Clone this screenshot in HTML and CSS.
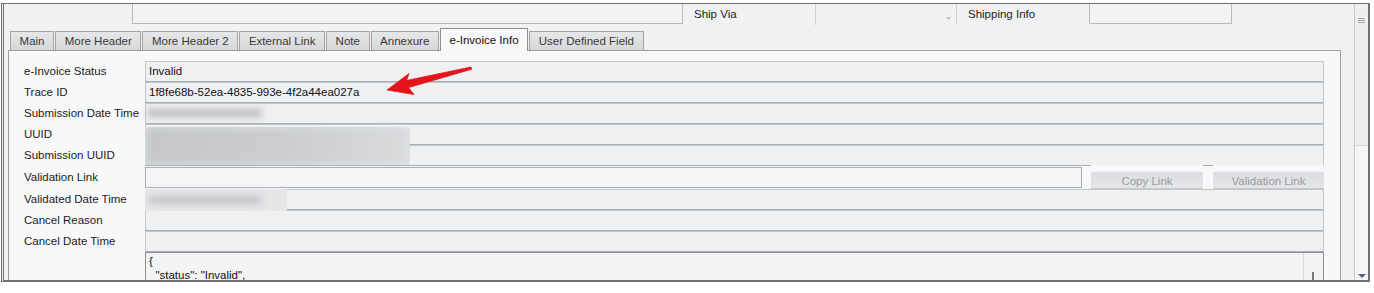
FILE: index.html
```html
<!DOCTYPE html>
<html lang="en">
<head>
  <meta charset="UTF-8" />
  <title>e-Invoice Info</title>
  <link rel="stylesheet" href="styles.css">
</head>
<body>
  <div class="window">
    <div class="main">
      <div class="top-row">
        <div class="box box-wide"></div>
        <div class="top-label">Ship Via</div>
        <div class="combo"><span class="combo-arrow"></span></div>
        <div class="top-label">Shipping Info</div>
        <div class="box box-short"></div>
      </div>

      <div class="tabs">
        <div class="tab">Main</div>
        <div class="tab">More Header</div>
        <div class="tab">More Header 2</div>
        <div class="tab">External Link</div>
        <div class="tab">Note</div>
        <div class="tab">Annexure</div>
        <div class="tab active">e-Invoice Info</div>
        <div class="tab">User Defined Field</div>
      </div>

      <div class="panel">
        <div class="form">
          <div class="label">e-Invoice Status</div>
          <div class="field">Invalid</div>

          <div class="label">Trace ID</div>
          <div class="field">1f8fe68b-52ea-4835-993e-4f2a44ea027a</div>

          <div class="label">Submission Date Time</div>
          <div class="field"></div>

          <div class="label">UUID</div>
          <div class="field"></div>

          <div class="label">Submission UUID</div>
          <div class="field"></div>

          <div class="label link-row">Validation Link</div>
          <div class="link-row link-cell">
            <div class="link-input"></div>
            <button class="btn btn-copy">Copy Link</button>
            <button class="btn btn-open">Validation Link</button>
          </div>

          <div class="label">Validated Date Time</div>
          <div class="field"></div>

          <div class="label">Cancel Reason</div>
          <div class="field"></div>

          <div class="label">Cancel Date Time</div>
          <div class="field"></div>

          <div class="label"></div>
          <div class="json-box">
            <pre class="json">{
  "status": "Invalid",</pre>
            <div class="json-scroll"><span class="json-thumb"></span></div>
          </div>
        </div>

        <!-- masked values -->
        <div class="mask mask-submit-date"></div>
        <div class="mask mask-uuid"></div>
        <div class="mask mask-validated"><span class="mask-text"></span></div>
      </div>
    </div>

    <div class="vscroll">
      <div class="thumb"><span class="grip"></span></div>
      <span class="down-arrow"></span>
    </div>
  </div>

  <svg class="pointer" width="100" height="40" viewBox="0 0 100 40">
    <path d="M7 30 L29 13.5 L26.5 20.5 L91 7 L91.8 9.2 L28.5 27.6 L34 34.5 Z" fill="#e5141b" stroke="#e5141b" stroke-width="0.8" stroke-linejoin="round" />
  </svg>
</body>
</html>
```

FILE: styles.css
```css
* {
  box-sizing: border-box;
}

body {
  margin: 0;
  background: #fff;
  font-family: "Liberation Sans", Arial, sans-serif;
  font-size: 11.5px;
  color: #1c1c1c;
}

.window {
  display: flex;
  width: 1369px;
  height: 279px;
  margin: 3px 0 0 1px;
  border: 1px solid #6f6f6f;
  border-left: 3px double #6f6f6f;
  border-right-width: 2px;
  border-bottom-width: 2px;
  background: #f0f1f3;
  overflow: hidden;
}

.main {
  width: 1350px;
  flex: none;
}

/* top strip, cut off by the scroll position */
.top-row {
  display: flex;
  height: 20px;
}

.box {
  height: 20px;
  border: 1px solid #b9bcbf;
  border-top: none;
  background: #f2f3f5;
}

.box-wide {
  width: 551px;
  margin-left: 128px;
}

.box-short {
  width: 143px;
}

.top-label {
  width: 132px;
  padding: 4px 0 0 11px;
  color: #1c1c1c;
}

.combo {
  width: 142px;
  height: 21px;
  border-left: 1px solid #cfd1d4;
  border-right: 1px solid #cfd1d4;
  display: flex;
  justify-content: flex-end;
  align-items: center;
  padding: 5px 6px 0 0;
}

.combo-arrow {
  width: 3px;
  height: 3px;
  border-right: 1px solid #a4a6a9;
  border-bottom: 1px solid #a4a6a9;
  transform: rotate(45deg);
}

/* tabs */
.tabs {
  display: flex;
  align-items: flex-end;
  height: 22px;
  margin-top: 4px;
  padding-left: 6px;
}

.tab {
  height: 19px;
  line-height: 18px;
  padding: 0 8.6px;
  margin-right: 1px;
  border: 1px solid #a3a4a6;
  border-bottom: none;
  background: linear-gradient(#e6e7e9, #d6d7d9);
  color: #3a3a3a;
  white-space: nowrap;
}

.tab.active {
  position: relative;
  z-index: 1;
  height: 23px;
  line-height: 22px;
  margin-bottom: -1px;
  border-color: #8e8f91;
  background: #f7f8f9;
  color: #111;
}

/* panel */
.panel {
  position: relative;
  width: 1333px;
  height: 260px;
  margin-left: 4px;
  padding: 10px 16px 0 15px;
  border: 1px solid #9c9d9f;
  background: #f7f8f9;
}

.form {
  display: grid;
  grid-template-columns: 121px 1fr;
  grid-template-rows: repeat(5, 21px) 23px;
  grid-auto-rows: 21px;
}

.label {
  line-height: 21px;
  color: #1c1c1c;
  white-space: nowrap;
}

.field {
  height: 21px;
  line-height: 19px;
  padding-left: 3px;
  border: 1px solid #c3c6c9;
  border-bottom-color: #aaadb1;
  background: #eff0f2;
  color: #111;
}

.link-row {
  height: 23px;
  line-height: 23px;
}

.link-cell {
  display: flex;
  align-items: center;
}

.link-input {
  flex: 1;
  height: 21px;
  border: 1px solid #a9acb0;
  background: #f3f4f5;
}

.btn {
  height: 24px;
  margin-top: -1px;
  margin-left: 9px;
  padding: 9px 0 0;
  line-height: 14px;
  border: none;
  border-bottom: 1px solid #c6c8cb;
  background: linear-gradient(#f8f9fa 0, #f8f9fa 24%, #dcdee1 34%, #e4e5e7 100%);
  font-family: inherit;
  font-size: 11.5px;
  color: #979a9e;
}

.btn-copy {
  width: 112px;
}

.btn-open {
  width: 111px;
  margin-left: 10px;
}

.json-box {
  display: flex;
  height: 60px;
  border: 1px solid #8c8e91;
  background: #f2f3f4;
}

.json {
  flex: 1;
  margin: 0;
  padding: 1px 3px 0;
  font-family: inherit;
  font-size: 11.5px;
  line-height: 14px;
  color: #111;
}

.json-scroll {
  width: 20px;
  border-left: 1px solid #d8dadc;
  padding: 19px 0 0 8px;
}

.json-thumb {
  display: block;
  width: 2px;
  height: 14px;
  background: #777;
}

/* blurred values */
.mask {
  position: absolute;
  pointer-events: none;
}

.mask-submit-date {
  left: 138px;
  top: 57px;
  width: 115px;
  height: 10px;
  background: #c3c6c9;
  filter: blur(3px);
}

.mask-uuid {
  left: 136px;
  top: 76px;
  width: 265px;
  height: 38px;
  background: linear-gradient(90deg, #c4c6c9, #cbcdd0 55%, #d9dbdd);
  box-shadow: inset 0 0 8px #e2e4e6;
}

.mask-validated {
  left: 136px;
  top: 138px;
  width: 142px;
  height: 22px;
  background: #e5e6e8;
}

.mask-text {
  position: absolute;
  left: 4px;
  top: 7px;
  width: 112px;
  height: 8px;
  background: #c4c6c9;
  filter: blur(3px);
}

/* window scrollbar */
.vscroll {
  display: flex;
  flex-direction: column;
  align-items: center;
  width: 14px;
  border-left: 1px solid #c5c7ca;
  background: #f5f6f7;
}

.thumb {
  width: 100%;
  height: 142px;
  padding-top: 14px;
  display: flex;
  justify-content: center;
  background: #eeeff1;
  border-bottom: 1px solid #d4d6d8;
}

.grip {
  width: 7px;
  height: 5px;
  background: repeating-linear-gradient(#a2a4a7 0, #a2a4a7 1px, transparent 1px, transparent 2px);
}

.down-arrow {
  margin-top: auto;
  margin-bottom: 2px;
  width: 0;
  height: 0;
  border-left: 4px solid transparent;
  border-right: 4px solid transparent;
  border-top: 4px solid #52607c;
}

.pointer {
  position: absolute;
  left: 380px;
  top: 60px;
}
```
